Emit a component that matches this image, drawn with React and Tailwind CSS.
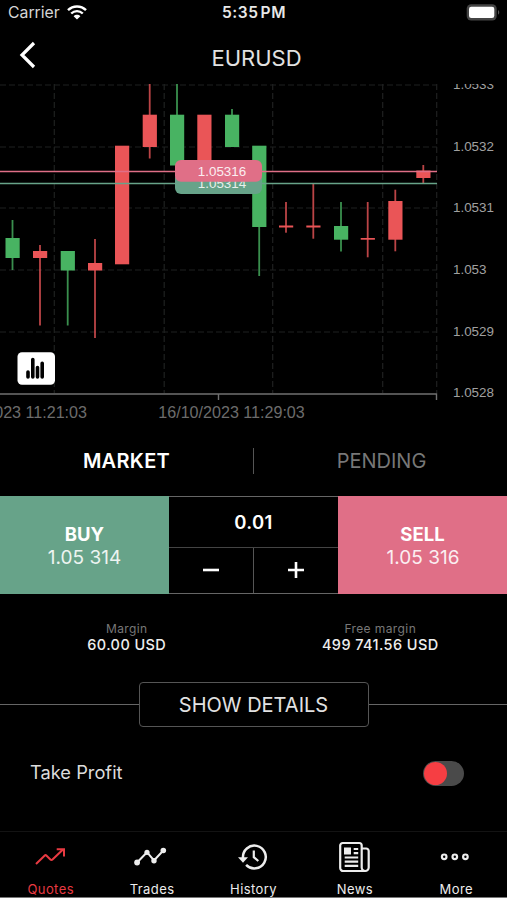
import React, { useState } from 'react';

const RED = '#ea5557';
const GREEN = '#48b362';

// x = centre of the candle, wick and body are [top, bottom]
const candles = [
  { x: 12.5, wick: [136, 186], body: [154, 174], up: true },
  { x: 40, wick: [161, 241.5], body: [167, 174], up: false },
  { x: 67.7, wick: [167, 241.5], body: [167, 186.5], up: true },
  { x: 95, wick: [155, 254], body: [179, 186.5], up: false },
  { x: 122, wick: [62, 180], body: [61.7, 180.3], up: false },
  { x: 149.7, wick: [0, 74.5], body: [30.7, 63], up: false },
  { x: 177, wick: [0, 81], body: [30.7, 81.5], up: true },
  { x: 204.3, wick: [31, 81], body: [30.7, 84], up: false },
  { x: 232, wick: [25, 63], body: [30.7, 63], up: true },
  { x: 259.2, wick: [62, 192], body: [61.7, 143], up: true },
  { x: 286, wick: [118, 148.7], body: [141.5, 143.5], up: false },
  { x: 313.3, wick: [100, 154.7], body: [141.5, 143.5], up: false },
  { x: 341, wick: [118, 167.5], body: [142, 155.7], up: true },
  { x: 367.7, wick: [118, 173.3], body: [154, 155.7], up: false },
  { x: 395.3, wick: [105.7, 167.3], body: [117, 155.7], up: false },
  { x: 423.3, wick: [81, 99], body: [86.5, 94], up: false },
];

const prices = [
  { label: '1.0533', y: 5 },
  { label: '1.0532', y: 66.7 },
  { label: '1.0531', y: 128.3 },
  { label: '1.053', y: 190 },
  { label: '1.0529', y: 251.7 },
  { label: '1.0528', y: 313.3 },
];

const Chart = () => (
  <svg width="507" height="346" viewBox="0 0 507 346" className="block shrink-0 overflow-hidden font-['Liberation_Sans',sans-serif]">
    <g stroke="#1f2120" strokeWidth="1.2" strokeDasharray="6 3">
      {[1, 63, 124, 186, 248].map((y) => (
        <line key={y} x1="0" x2="437" y1={y} y2={y} />
      ))}
      {[54.3, 164.2, 272.7, 382.7, 436.7].map((x) => (
        <line key={x} x1={x} x2={x} y1="0" y2="309" />
      ))}
    </g>
    <path d="M0 310H436.5V316M218.5 310V316" fill="none" stroke="#707070" strokeWidth="1.4" />

    {candles.map((c) => (
      <g key={c.x} fill={c.up ? GREEN : RED}>
        <rect x={c.x - 0.9} y={c.wick[0]} width="1.8" height={c.wick[1] - c.wick[0]} opacity="0.8" />
        <rect x={c.x - 7} y={c.body[0]} width="14.2" height={c.body[1] - c.body[0]} />
      </g>
    ))}

    <line x1="0" x2="437" y1="87.4" y2="87.4" stroke="#e06f87" strokeWidth="1.5" />
    <line x1="0" x2="437" y1="99.5" y2="99.5" stroke="#67a389" strokeWidth="1.5" />
    <g fontSize="13.4" textAnchor="middle">
      <rect x="175" y="88" width="87" height="22" rx="6" fill="#67a389" />
      <text x="222" y="104" fill="#e8efeb">1.05314</text>
      <rect x="175" y="76" width="87" height="21.7" rx="6" fill="#e06f87" />
      <text x="222" y="92" fill="#fbeef1">1.05316</text>
    </g>

    <g fontSize="13.4" fill="#a0a0a0">
      {prices.map((p) => (
        <text key={p.label} x="453" y={p.y}>{p.label}</text>
      ))}
    </g>
    <g fontSize="16.1" fill="#6c6c6c">
      <text x="87" y="334" textAnchor="end">16/10/2023 11:21:03</text>
      <text x="158.3" y="334">16/10/2023 11:29:03</text>
    </g>

    <rect x="17.5" y="268.3" width="37.5" height="32.5" rx="4.5" fill="#fff" />
    <path d="M28 288V293M32.8 275.6V293M37.5 283.6V293M42.2 279.2V293" stroke="#000" strokeWidth="3.6" strokeLinecap="round" />
  </svg>
);

const QuotesIcon = () => (
  <svg width="34" height="34" viewBox="1 0 34 34" fill="none" stroke="currentColor" strokeWidth="2">
    <path d="M3 24L11.5 15.7C12.2 15 12.9 15 13.6 15.7L17.4 19.5C18.1 20.2 18.8 20.2 19.5 19.5L30 9.5M23.7 9.3H31V16.5" />
  </svg>
);

const TradesIcon = () => (
  <svg width="34" height="34" viewBox="2.2 0.3 34 34" fill="currentColor" stroke="currentColor" strokeWidth="2" className="overflow-visible">
    <path d="M4.3 22.8L14.2 12.5L21.2 20.8L30.5 10.8" fill="none" />
    <g stroke="none">
      <circle cx="4.3" cy="22.8" r="2.9" />
      <circle cx="14.2" cy="12.6" r="2.6" />
      <circle cx="21.2" cy="21" r="2.7" />
      <circle cx="30.5" cy="10.8" r="2.8" />
    </g>
  </svg>
);

const HistoryIcon = () => (
  <svg width="34" height="34" viewBox="-0.8 0 34 34" fill="none" stroke="currentColor" strokeWidth="2.5">
    <path d="M6.2 18A11.4 11.4 0 1 1 9.3 24.9" />
    <path d="M1.2 17.3H11.2L6.2 22.8Z" fill="currentColor" stroke="none" />
    <path d="M17 10.5V17.2L21.5 21" strokeWidth="2.2" />
  </svg>
);

const NewsIcon = () => (
  <svg width="34" height="34" viewBox="0.3 0 34 34" fill="none" stroke="currentColor" strokeWidth="2.2">
    <path d="M28 31H5.5A3 3 0 0 1 2.5 28V5.5A2.5 2.5 0 0 1 5 3H21.5A2.5 2.5 0 0 1 24 5.5V27.5A3.500 3.500 0 0 0 27.5 31A3.500 3.500 0 0 0 31 27.5V11A2.500 2.500 0 0 0 28.5 8.5H24" />
    <rect x="6.3" y="7.5" width="7" height="7" fill="currentColor" stroke="none" />
    <path d="M16 9H20.5M16 13.2H20.5M7 17.5H20.5M7 21.7H20.5M7 25.9H20.5" />
  </svg>
);

const MoreIcon = () => (
  <svg width="34" height="34" viewBox="0.8 0.2 34 34" fill="none" stroke="currentColor" strokeWidth="2.2">
    <circle cx="6" cy="17" r="2.3" />
    <circle cx="16.6" cy="17" r="2.3" />
    <circle cx="27.2" cy="17" r="2.3" />
  </svg>
);

const tabs = [
  { name: 'Quotes', icon: QuotesIcon },
  { name: 'Trades', icon: TradesIcon },
  { name: 'History', icon: HistoryIcon },
  { name: 'News', icon: NewsIcon },
  { name: 'More', icon: MoreIcon },
];

const App = () => {
  const [volume, setVolume] = useState(0.01);
  const [activeTab, setActiveTab] = useState('Quotes');

  const changeVolume = (step) => {
    setVolume((prev) => Math.max(0.01, prev + step));
  };

  return (
    <div className="w-[507px] h-[900px] overflow-hidden bg-white font-[Inter,sans-serif]">
      <div className="flex flex-col h-[898px] bg-black text-white border-b border-[#777]">
        {/* Status bar */}
        <div className="grid grid-cols-3 items-center h-[25px] shrink-0 pl-2 pr-[7px]">
          <div className="flex items-center gap-[7px] text-[15.8px] text-[#d6d6d6]">
            <span>Carrier</span>
            <svg width="20" height="15" viewBox="0 0 20 15" fill="none" stroke="#fff" strokeWidth="2.4">
              <path d="M1 5.2C6 .2 14 .2 19 5.2M4.2 8.5C7.5 5.3 12.5 5.3 15.8 8.5" />
              <path d="M6.6 11.2C8.5 9.3 11.5 9.3 13.4 11.2L10 14.6Z" fill="#fff" stroke="none" />
            </svg>
          </div>
          <span className="text-center text-[15.5px] font-semibold tracking-[0.6px] [word-spacing:-2.5px] text-[#e8e8e8]">5:35 PM</span>
          <svg width="34" height="18" viewBox="0 0 34 18" className="justify-self-end">
            <rect x=".7" y=".2" width="30" height="16.3" rx="4.5" fill="#444" />
            <rect x="3" y="2.7" width="25.3" height="11.3" rx="2.3" fill="#fff" />
            <path d="M32 6C33.7 6.8 33.7 10 32 10.8Z" fill="#555" />
          </svg>
        </div>

        {/* Header */}
        <div className="grid grid-cols-[63px_1fr_57px] items-center h-[59px] shrink-0">
          <button className="pl-[19px]">
            <svg width="18" height="28" viewBox="0 0 18 28" fill="none" stroke="#fff" strokeWidth="3.2">
              <path d="M15 2L3 14L15 26" />
            </svg>
          </button>
          <h1 className="pt-[7px] text-center text-[22px] text-[#e2e2e2]">EURUSD</h1>
        </div>

        <Chart />

        {/* Order type */}
        <div className="flex items-center h-[66px] shrink-0 pb-1 text-center text-[20px]">
          <div className="flex-1 font-semibold tracking-[0.3px]">MARKET</div>
          <div className="w-px h-[26px] bg-[#555]" />
          <div className="flex-1 text-[#777]">
            <span className="pl-0.5">PENDING</span>
          </div>
        </div>

        <div className="flex h-[98px] shrink-0">
          <button className="flex flex-col items-center justify-center w-[169px] pt-px bg-[#67a389]">
            <span className="text-[18.5px] leading-[23px] font-bold">BUY</span>
            <span className="text-[19px] leading-[23px] text-[#edf4f1]">1.05 314</span>
          </button>
          <div className="flex flex-1 flex-col border-y border-[#666]">
            <div className="flex items-center justify-center h-[51px] pt-0.5 border-b border-[#444] text-[18.5px] font-semibold tracking-[0.4px]">
              {volume.toFixed(2)}
            </div>
            <div className="flex flex-1">
              <button onClick={() => changeVolume(-0.01)} className="flex flex-1 items-center justify-center pb-0.5 border-r border-[#555]">
                <svg width="18" height="18" viewBox="0 0 18 18" stroke="#fff" strokeWidth="2.6"><path d="M1 9H17" /></svg>
              </button>
              <button onClick={() => changeVolume(0.01)} className="flex flex-1 items-center justify-center pb-0.5">
                <svg width="18" height="18" viewBox="0 0 18 18" stroke="#fff" strokeWidth="2.6"><path d="M1 9H17M9 1V17" /></svg>
              </button>
            </div>
          </div>
          <button className="flex flex-col items-center justify-center w-[169px] pt-px bg-[#e06f87]">
            <span className="text-[18.5px] leading-[23px] font-bold">SELL</span>
            <span className="pl-px text-[19px] leading-[23px] text-[#fbeef1]">1.05 316</span>
          </button>
        </div>

        {/* Margin info */}
        <div className="flex h-[88px] shrink-0 pt-[27px] text-center">
          <div className="flex-1">
            <p className="text-[12px] leading-[15px] tracking-[0.4px] text-[#777]">Margin</p>
            <p className="text-[14.5px] leading-[18px] font-medium tracking-[0.4px] text-[#eee]">60.00 USD</p>
          </div>
          <div className="flex-1">
            <p className="text-[12px] leading-[15px] tracking-[0.4px] text-[#777]">Free margin</p>
            <p className="text-[14.5px] leading-[18px] font-medium tracking-[0.4px] text-[#eee]">499 741.56 USD</p>
          </div>
        </div>

        <div className="flex items-center h-[45px] shrink-0">
          <div className="flex-1 h-px bg-[#666]" />
          <button className="w-[230px] h-[45px] rounded border border-[#555] text-[20px] text-[#e2e2e2]">SHOW DETAILS</button>
          <div className="flex-1 h-px bg-[#666]" />
        </div>

        <div className="flex items-center justify-between h-[26px] shrink-0 mt-[33px] pl-[30px] pr-[43px]">
          <span className="pb-px text-[18.3px] text-[#dcdcdc]">Take Profit</span>
          <div className="w-[41px] h-[25px] rounded-full bg-[#4a4a4a] p-px">
            <div className="size-[23px] rounded-full bg-[#f63e43]" />
          </div>
        </div>

        {/* Bottom navigation */}
        <nav className="grid grid-cols-5 h-[66px] shrink-0 mt-auto border-t border-[#131313]">
          {tabs.map(({ name, icon: Icon }) => (
            <button
              key={name}
              onClick={() => setActiveTab(name)}
              className={`flex flex-col items-center pt-2 ${activeTab === name ? 'text-[#e83a42]' : 'text-[#ededed]'}`}
            >
              <Icon />
              <span className="mt-[7px] text-[13px] leading-[16px] tracking-[0.4px]">{name}</span>
            </button>
          ))}
        </nav>
      </div>
    </div>
  );
};

export default App;
